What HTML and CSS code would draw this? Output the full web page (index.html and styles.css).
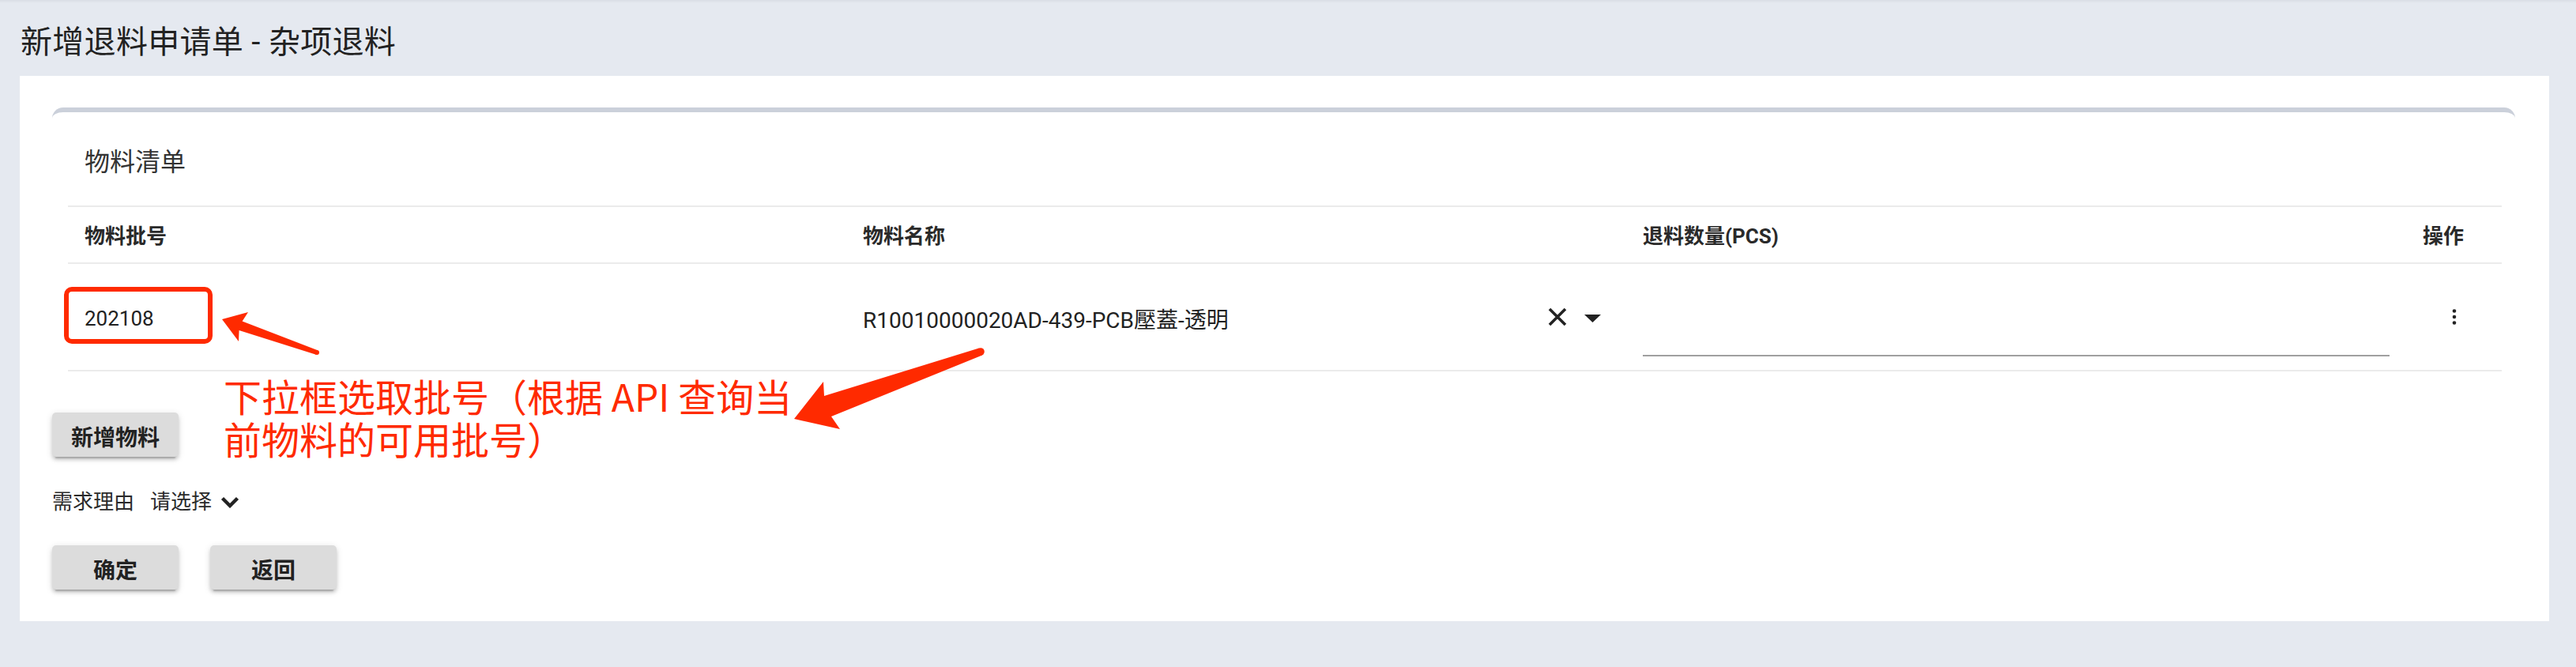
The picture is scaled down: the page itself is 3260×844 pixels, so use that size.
FILE: index.html
```html
<!DOCTYPE html>
<html lang="zh-CN">
<head>
<meta charset="utf-8">
<title>新增退料申请单 - 杂项退料</title>
<link rel="stylesheet" href="styles.css">
</head>
<body>
<div class="page">
  <h1 class="title">新增退料申请单 - 杂项退料</h1>
  <div class="card">
    <div class="panel">
      <div class="table">
        <div class="caption">物料清单</div>
        <div class="row head">
          <div class="cell">物料批号</div>
          <div class="cell">物料名称</div>
          <div class="cell">退料数量(PCS)</div>
          <div class="cell">操作</div>
        </div>
        <div class="row body">
          <div class="cell"><span class="batch">202108</span></div>
          <div class="cell name-cell">
            <span class="name">R10010000020AD-439-PCB壓蓋-透明</span>
            <span class="adorn">
              <svg class="clear" width="24" height="24" viewBox="0 0 24 24"><path d="M2 2 L22 22 M22 2 L2 22" stroke="#222" stroke-width="3.6" stroke-linecap="butt" fill="none"/></svg>
              <svg class="drop" width="21" height="10" viewBox="0 0 21 10"><path d="M0 0 H21 L10.5 10 Z" fill="#222"/></svg>
            </span>
          </div>
          <div class="cell"><div class="qty-field"></div></div>
          <div class="cell menu-cell">
            <svg width="6" height="20" viewBox="0 0 6 20"><circle cx="3" cy="2.5" r="2.3" fill="#222"/><circle cx="3" cy="10" r="2.3" fill="#222"/><circle cx="3" cy="17.5" r="2.3" fill="#222"/></svg>
          </div>
        </div>
      </div>
      <button class="btn add">新增物料</button>
      <div class="reason">
        <span class="label">需求理由</span>
        <span class="select">请选择
          <svg class="chev" width="24" height="15" viewBox="0 0 24 15"><path d="M2.5 2.5 L12 12 L21.5 2.5" stroke="#222" stroke-width="4.4" fill="none"/></svg>
        </span>
      </div>
      <div class="actions">
        <button class="btn">确定</button>
        <button class="btn">返回</button>
      </div>
    </div>
  </div>

  <div class="mark-box"></div>
  <div class="note">
    <div class="note-line">下拉框选取批号（根据<span class="latin"> API </span>查询当</div>
    <div class="note-line">前物料的可用批号）</div>
  </div>
  <svg class="arrows" width="3260" height="844" viewBox="0 0 3260 844">
    <polygon points="281,404 314,395 306.6,406.6 402,443.2 400,448.8 302.6,418 302,432" fill="#ff2a00"/>
    <circle cx="401" cy="446" r="3" fill="#ff2a00"/>
    <polygon points="1005,530 1042,483 1043,501 1239,440.5 1243,449.5 1052,527 1063,543" fill="#ff2a00"/>
    <circle cx="1241" cy="445" r="4.8" fill="#ff2a00"/>
  </svg>
</div>
</body>
</html>
```
FILE: styles.css
```css
html, body {
  margin: 0;
  padding: 0;
}
body {
  background: linear-gradient(#d9dde5, #e5e9f0 4px) no-repeat, #e5e9f0;
  font-family: Roboto, "Noto Sans CJK SC", sans-serif;
  color: #222;
  width: 3260px;
  height: 844px;
  overflow: hidden;
}
.page {
  position: relative;
  width: 3260px;
  height: 844px;
}
.title {
  margin: 0;
  padding: 34px 0 22px 26px;
  font-size: 40px;
  line-height: 40px;
  font-weight: normal;
  letter-spacing: 0.3px;
  color: #222;
}
.card {
  margin-left: 25px;
  width: 3201px;
  box-sizing: border-box;
  background: #fff;
  padding: 40px 43px 40px 41px;
}
.panel {
  border-top: 6px solid #cbd0da;
  border-radius: 14px 14px 0 0;
}
.table {
  margin: 0 17px 0 20px;
}
.caption {
  padding: 47px 21px 39px;
  font-size: 32px;
  line-height: 32px;
  color: #333;
  border-bottom: 2px solid #ebebeb;
}
.row {
  display: grid;
  grid-template-columns: 985px 987px 987px 121px;
  border-bottom: 2px solid #ebebeb;
}
.head .cell {
  padding: 24px 21px 20px;
  font-size: 26px;
  line-height: 26px;
  font-weight: bold;
  color: #2a2a2a;
  white-space: nowrap;
}
.body {
  height: 136px;
  box-sizing: border-box;
}
.body .cell {
  display: flex;
  align-items: center;
  padding: 0 21px;
}
.batch {
  font-size: 26px;
  line-height: 26px;
  margin-top: 4px;
}
.name-cell {
  justify-content: space-between;
  padding-right: 32px !important;
}
.name {
  font-size: 28px;
  line-height: 32px;
  margin-top: 9px;
  white-space: nowrap;
}
.adorn {
  display: flex;
  align-items: center;
  gap: 22px;
}
.drop {
  margin-top: 3px;
}
.qty-field {
  flex: 1;
  height: 98px;
  box-sizing: border-box;
  border-bottom: 2px solid #a0a0a0;
  margin-top: 2px;
}
.menu-cell {
  justify-content: center;
  padding: 0 !important;
}
.btn {
  display: block;
  width: 160px;
  height: 56px;
  border: none;
  border-radius: 5px;
  background: #dcdcdc;
  box-shadow: 0 6px 2px -4px rgba(0,0,0,0.2), 0 4px 4px 0 rgba(0,0,0,0.14), 0 2px 10px 0 rgba(0,0,0,0.12);
  font-family: Roboto, "Noto Sans CJK SC", sans-serif;
  font-size: 28px;
  font-weight: bold;
  color: #222;
  padding: 3px 0 0;
  margin: 0;
}
.add {
  margin-top: 52px;
}
.reason {
  display: flex;
  align-items: center;
  margin-top: 44px;
  font-size: 26px;
  line-height: 26px;
  color: #2a2a2a;
}
.label {
  margin-right: 20px;
}
.select {
  display: flex;
  align-items: center;
  gap: 11px;
}
.actions {
  display: flex;
  gap: 40px;
  margin-top: 42px;
}
.mark-box {
  position: absolute;
  left: 81px;
  top: 363px;
  width: 188px;
  height: 72px;
  box-sizing: border-box;
  border: 6px solid #ff2a00;
  border-radius: 10px;
}
.note {
  position: absolute;
  left: 283px;
  top: 473px;
  font-family: "Liberation Sans", "Noto Sans CJK SC", sans-serif;
  font-size: 48px;
  color: #ff2a00;
  white-space: nowrap;
}
.note-line {
  line-height: 54px;
}
.latin {
  font-family: "Noto Sans CJK SC", sans-serif;
}
.arrows {
  position: absolute;
  left: 0;
  top: 0;
  pointer-events: none;
}
```
